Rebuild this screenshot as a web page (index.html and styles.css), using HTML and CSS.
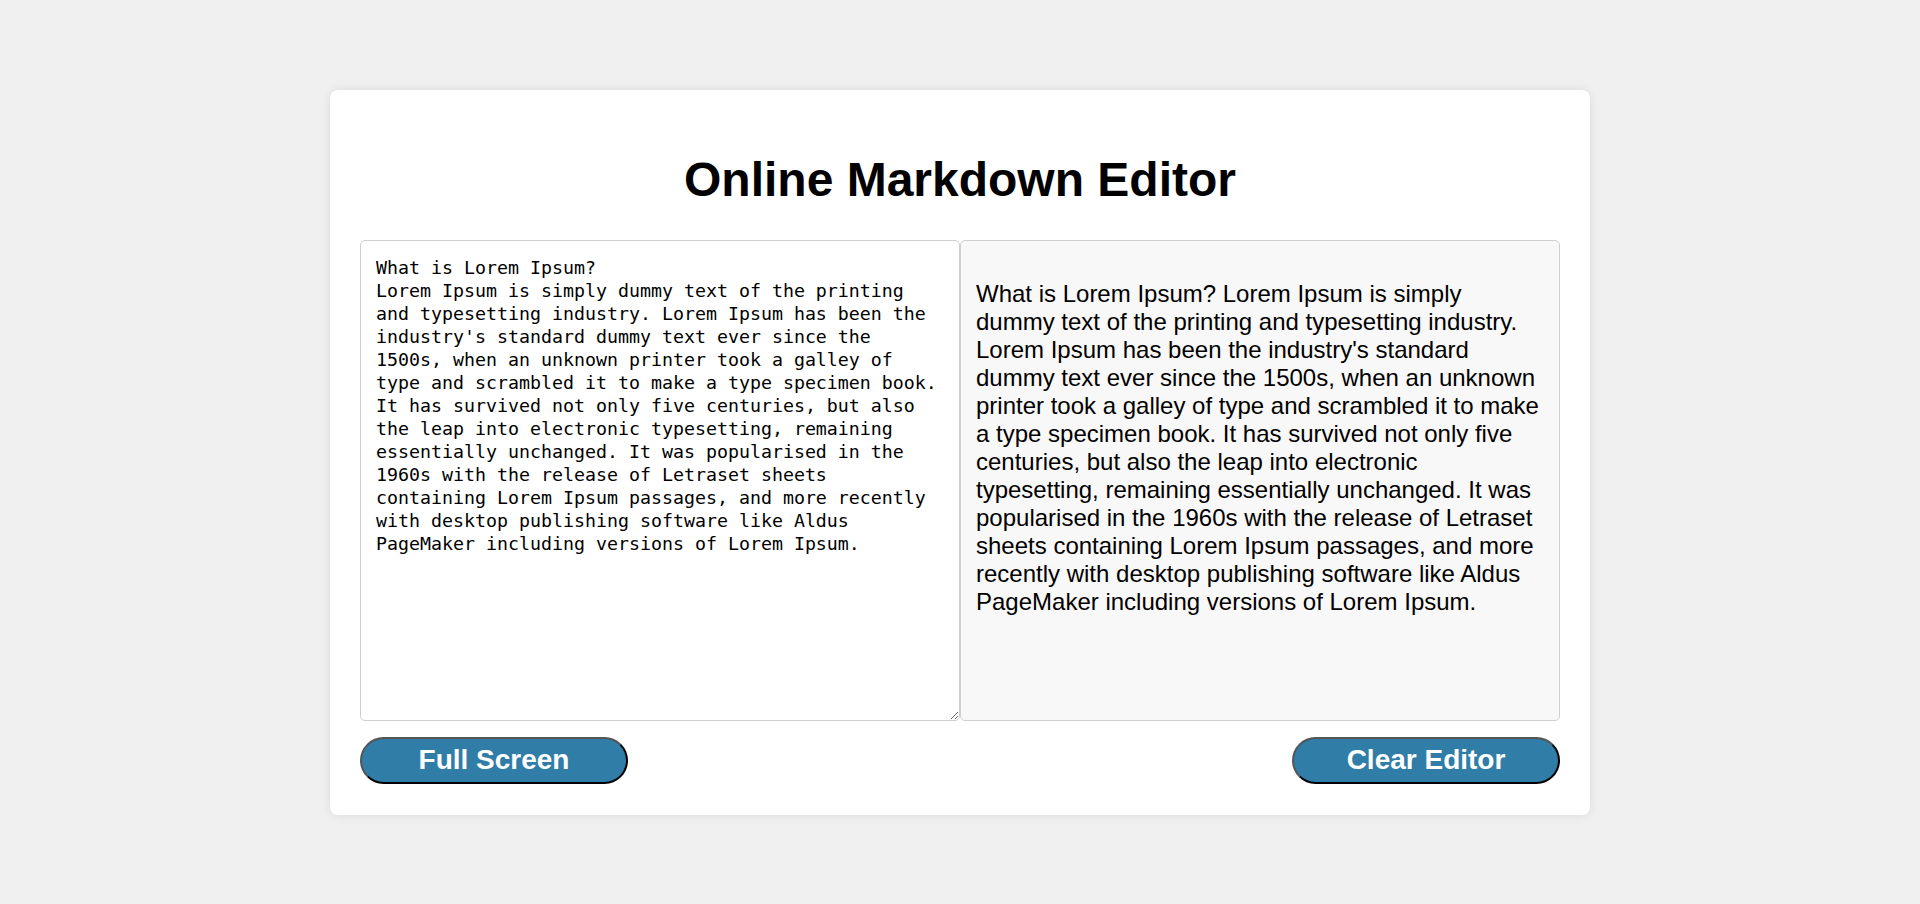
FILE: index.html
```html
<!DOCTYPE html>
<html lang="en">
<head>
<meta charset="utf-8">
<title>Online Markdown Editor</title>
<link rel="stylesheet" href="styles.css">
</head>
<body>
<main class="card">
  <h1 class="title">Online Markdown Editor</h1>
  <div class="panes">
    <textarea class="editor" spellcheck="false">What is Lorem Ipsum?
Lorem Ipsum is simply dummy text of the printing and typesetting industry. Lorem Ipsum has been the industry's standard dummy text ever since the 1500s, when an unknown printer took a galley of type and scrambled it to make a type specimen book. It has survived not only five centuries, but also the leap into electronic typesetting, remaining essentially unchanged. It was popularised in the 1960s with the release of Letraset sheets containing Lorem Ipsum passages, and more recently with desktop publishing software like Aldus PageMaker including versions of Lorem Ipsum.</textarea>
    <div class="preview">
      <p>What is Lorem Ipsum? Lorem Ipsum is simply dummy text of the printing and typesetting industry. Lorem Ipsum has been the industry's standard dummy text ever since the 1500s, when an unknown printer took a galley of type and scrambled it to make a type specimen book. It has survived not only five centuries, but also the leap into electronic typesetting, remaining essentially unchanged. It was popularised in the 1960s with the release of Letraset sheets containing Lorem Ipsum passages, and more recently with desktop publishing software like Aldus PageMaker including versions of Lorem Ipsum.</p>
    </div>
  </div>
  <div class="actions">
    <button class="btn" type="button">Full Screen</button>
    <button class="btn" type="button">Clear Editor</button>
  </div>
</main>
</body>
</html>
```

FILE: styles.css
```css
html, body {
  height: 100%;
}

body {
  margin: 0;
  background: #f0f0f0;
  font-family: "Liberation Sans", Arial, sans-serif;
  color: #000;
  display: flex;
  align-items: center;
  justify-content: center;
}

.card {
  width: 1200px;
  padding: 30px 30px 31px;
  background: #fff;
  border-radius: 8px;
  box-shadow: 0 0 12px rgba(0, 0, 0, 0.09);
}

.title {
  margin: 32px 0 33px;
  font-size: 48px;
  font-weight: bold;
  text-align: center;
  line-height: 55px;
}

.panes {
  display: flex;
}

.editor,
.preview {
  box-sizing: border-box;
  width: 600px;
  height: 481px;
  margin: 0;
  padding: 15px;
  border: 1px solid #cfcfcf;
  border-radius: 5px;
}

.editor {
  display: block;
  font-family: "DejaVu Sans Mono", "Liberation Mono", monospace;
  font-size: 18.27px;
  line-height: 23px;
  color: #000;
  background: #fff;
  outline: none;
}

.preview {
  background: #f8f8f8;
  font-size: 24px;
  line-height: 28px;
  overflow: auto;
}

.preview p {
  margin: 24px 0;
}

.actions {
  display: flex;
  justify-content: space-between;
  margin-top: 16px;
}

.btn {
  box-sizing: border-box;
  width: 268px;
  height: 47px;
  padding: 0;
  border: 2px solid;
  border-color: #555 #000 #000 #555;
  border-radius: 24px;
  background: #307da7;
  color: #fff;
  font-family: "Liberation Sans", Arial, sans-serif;
  font-size: 28px;
  font-weight: bold;
  cursor: pointer;
}
```
